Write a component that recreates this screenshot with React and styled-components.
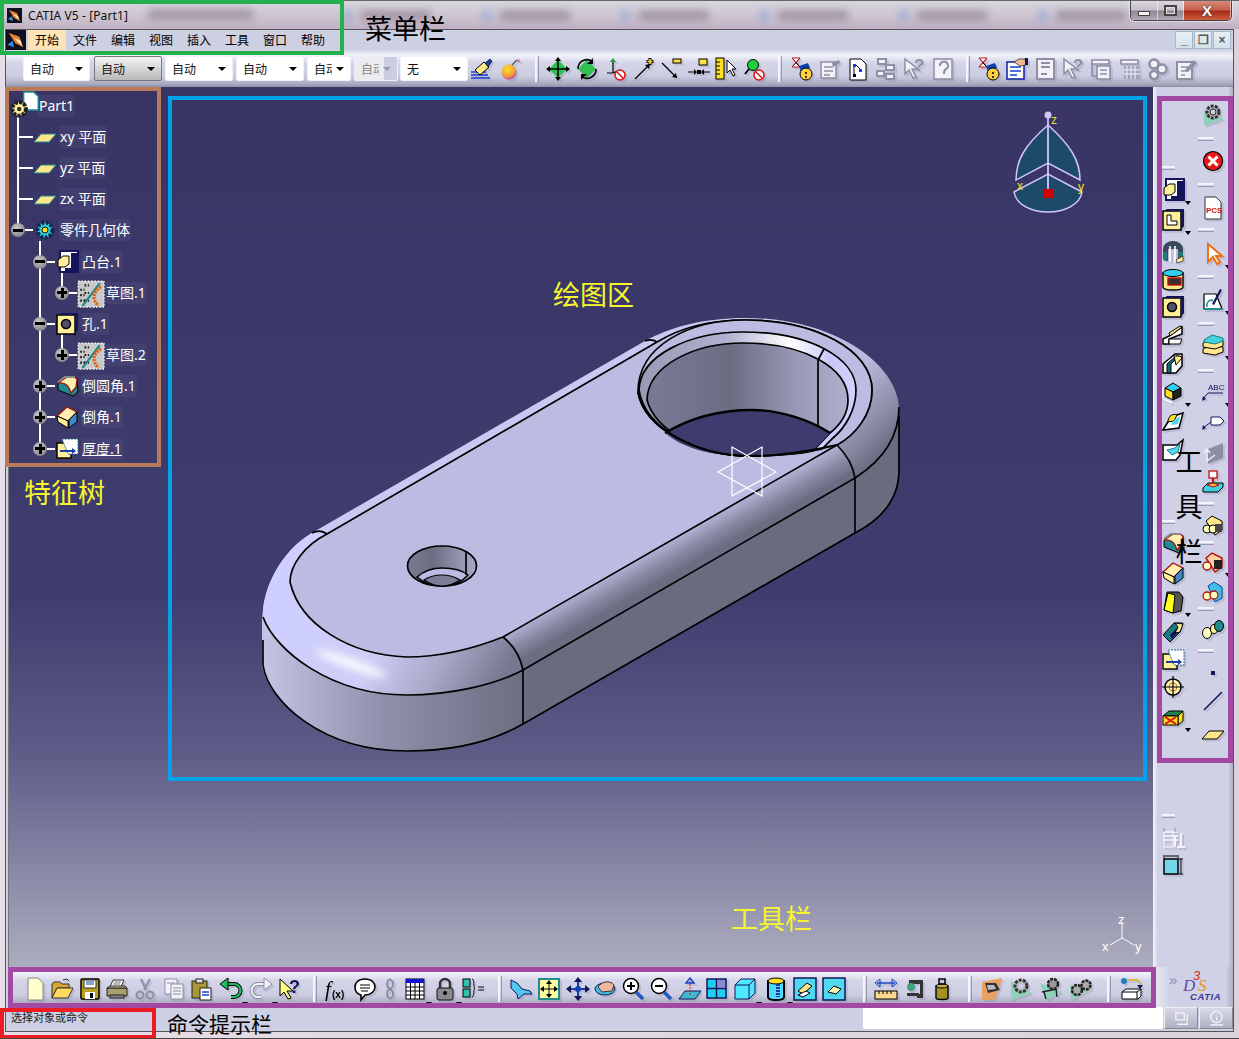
import React from 'react'
import styled, { createGlobalStyle } from 'styled-components'

const CJK = '"Noto Sans CJK SC", "Noto Sans", sans-serif'
const UI = '"Noto Sans", "Noto Sans CJK SC", sans-serif'

const GlobalStyle = createGlobalStyle`
  html, body { margin: 0; padding: 0; background: #cdcfe3; }
  * { box-sizing: border-box; }
`

const G = '#8e8ea4'
const W = '#f2f2f8'
const NAVY = '#14145a'

// small toolbar drawings, all on a 24x24 grid
const ICONS = {
  brush: <><path d="M1 15h15M1 18h17M1 21h19" stroke="#1a3fd0" strokeWidth="1.5"/><path d="M5 13l9-8 5 5-9 8z" fill="#ffee88" stroke="#000"/><path d="M15 6l5-4 2 2-4 6z" fill="#1a3fa0" stroke="#000" strokeWidth=".6"/></>,
  bomb: <><circle cx="10" cy="15" r="7.5" fill="url(#bombFill)"/><path d="M13 8l5-5" stroke="#555" strokeWidth="1.4"/><path d="M18 1l1 2 2-1-1 2 2 1-3 0z" fill="#c05080"/></>,
  move: <><path d="M12 3l9 9-9 9-9-9z" fill="#30c050"/><path d="M12 1v22M1 12h22" stroke="#000" strokeWidth="1.5"/><path d="M12 0l3 4H9zM12 24l3-4H9zM0 12l4-3v6zM24 12l-4-3v6z"/></>,
  rotate: <><path d="M12 3l9 9-9 9-9-9z" fill="#30c050"/><path d="M3 12a9 9 0 0 1 15-7M21 12a9 9 0 0 1-15 7" stroke="#000" strokeWidth="1.6" fill="none"/><path d="M18 1v6h-6zM6 23v-6h6z"/></>,
  axisNo: <><path d="M8 16V5M8 16H2M8 16l7-3" stroke="#000" strokeWidth="1.2"/><path d="M8 1l3 4H5z" fill="#20a040"/><circle cx="15" cy="18" r="5" fill="#fff" stroke="#e01010" strokeWidth="1.5"/><path d="M12 15l6 6" stroke="#e01010" strokeWidth="1.5"/></>,
  arrowPlus: <><path d="M3 22L16 9" stroke="#000" strokeWidth="1.2"/><path d="M18 7l-5 1 4 4z"/><path d="M18 1v7M14.500 4.500h7" stroke="#000" strokeWidth="3"/><path d="M18 2v5M15.500 4.500h5" stroke="#ffe040" strokeWidth="1.500"/></>,
  arrowMinus: <><path d="M3 6l13 13" stroke="#000" strokeWidth="1.2"/><path d="M18 21l-5-1 4-4z"/><rect x="14" y="2" width="8" height="4" fill="#ffe040" stroke="#000"/></>,
  pointsEq: <><path d="M1 15h8M23 15h-8" stroke="#000" strokeWidth="1.2"/><path d="M10 15l-3-3v6zM14 15l3-3v6z"/><rect x="10" y="13" width="4" height="4"/><rect x="12" y="2" width="8" height="6" fill="#ffe040" stroke="#000"/></>,
  rulerCursor: <><rect x="1" y="1" width="8" height="21" fill="#ffe020" stroke="#000"/><path d="M1 5h4M1 9h4M1 13h4M1 17h4" stroke="#000"/><path d="M12 3v13l3-3 3 6 2-1-3-6h4z" fill="#fff" stroke="#000"/></>,
  lensNo: <><circle cx="9" cy="8" r="5.500" fill="#20d040" stroke="#000"/><path d="M5 12l-4 5" stroke="#000" strokeWidth="2"/><circle cx="15" cy="18" r="5" fill="#fff" stroke="#e01010" strokeWidth="1.5"/><path d="M12 15l6 6" stroke="#e01010" strokeWidth="1.5"/></>,
  hourHead: <><path d="M2 1h8L2 10h8z" fill="#fff" stroke="#c01010"/><path d="M2 1l8 9M10 1l-8 9" stroke="#a02020"/><path d="M6 6l6 6" stroke="#000"/><path d="M9 9l9-3 2 5-9 4z" fill="#1040b0"/><circle cx="16" cy="17" r="6" fill="#ffd040" stroke="#000"/><circle cx="16" cy="16" r="1"/><circle cx="16" cy="20" r="1"/></>,
  grayNote: <><rect x="3" y="5" width="15" height="16" fill={W} stroke={G} strokeWidth="1.5"/><path d="M6 10h9M6 14h9M6 18h6" stroke={G} strokeWidth="1.4"/><path d="M14 6l7-3 1 3-7 4z" fill={G}/></>,
  flowDoc: <><path d="M4 2h11l5 5v16H4z" fill="#fff" stroke="#000"/><rect x="7" y="7" width="3" height="3" fill="#1040d0"/><rect x="13" y="12" width="3" height="3" fill="#1040d0"/><rect x="7" y="17" width="3" height="3"/><path d="M8 10v7M10 8l4 4" stroke="#000"/></>,
  grayScatter: <><path d="M4 2h8v5H4zM12 8h8v5h-8zM3 14h7v5H3zM12 17h8v5h-8z" fill={W} stroke={G} strokeWidth="2"/></>,
  grayCursorQ: <><path d="M3 2v15l4-4 4 8 3-1-4-8h6z" fill={W} stroke={G} strokeWidth="1.5"/><text x="12" y="14" fontSize="17" fontWeight="700" fill={G} fontFamily="Liberation Sans, sans-serif">?</text></>,
  grayEar: <><rect x="3" y="2" width="18" height="20" fill={W} stroke={G} strokeWidth="1.5"/><path d="M9 9a4 4 0 1 1 6 3c-2 1-2 3-2 5" stroke={G} strokeWidth="2" fill="none"/></>,
  handDoc: <><rect x="2" y="5" width="17" height="17" fill="#fff" stroke="#1020a0" strokeWidth="1.5"/><path d="M5 10h11M5 14h11M5 18h7" stroke="#1040d0" strokeWidth="1.6"/><path d="M9 5l5-3h6l1 6-6 1z" fill="#f0b890" stroke="#000" strokeWidth=".6"/><rect x="20" y="1" width="3" height="7" fill={NAVY}/></>,
  graySave: <><rect x="4" y="2" width="17" height="20" fill={W} stroke={G} strokeWidth="2"/><path d="M8 6h9M8 10h9M8 17h6" stroke={G} strokeWidth="2"/></>,
  grayTable: <><path d="M3 3h17v4H3zM8 9h13v13H8z" fill={W} stroke={G} strokeWidth="1.6"/><path d="M11 13h7M11 17h7M3 7v12h5" stroke={G} strokeWidth="1.6" fill="none"/></>,
  grayGrid: <><path d="M3 3h17v4H3z" fill={W} stroke={G} strokeWidth="1.6"/><path d="M6 9h16v13H6z" fill={G} opacity=".55"/><path d="M9 9v13M13 9v13M17 9v13M6 13h16M6 17h16" stroke={W}/></>,
  grayGears: <><circle cx="8" cy="7" r="4.500" fill={W} stroke={G} strokeWidth="2.500"/><circle cx="16" cy="12" r="4.500" fill={W} stroke={G} strokeWidth="2.500"/><circle cx="8" cy="18" r="4" fill={W} stroke={G} strokeWidth="2.500"/></>,
  grayEdit: <><rect x="3" y="5" width="15" height="17" fill={W} stroke={G} strokeWidth="2"/><path d="M7 10h7M7 14h7M7 18h4" stroke={G} strokeWidth="1.5"/><path d="M11 13l9-10 3 3-9 9z" fill={G}/></>,

  pad: <><rect x="5" y="1" width="18" height="21" fill="#fff" stroke={NAVY} strokeWidth="2"/><path d="M16 3h6v18H10v-3h6z" fill={NAVY}/><path d="M3 10l5-4h6v8l-4 3H3z" fill="#ffef99" stroke="#000"/></>,
  pocket: <><rect x="2" y="3" width="18" height="19" fill="#ffef99" stroke="#000" strokeWidth="1.500"/><path d="M3 3l3-2h17v17l-3 4V3z" fill={NAVY}/><path d="M6 7v10h10v-4H10V7z" fill="#fff" stroke="#000"/></>,
  shaft: <><path d="M2 19V9a10 8 0 0 1 20 0v10l-5 2V9H7v12z" fill="#3a4a5a"/><path d="M2 12h4v9H3zM17 12h5v7l-3 2z" fill="#207a80"/><path d="M9 6v16M14 6v16" stroke="#fff" strokeWidth="1.6"/><path d="M15 20l7-4v5l-6 2z" fill="#ffef99" stroke="#000" strokeWidth=".6"/></>,
  groove: <><path d="M2 5v14c0 4 20 4 20 0V5z" fill="#ffe68a" stroke="#000" strokeWidth="1.400"/><ellipse cx="12" cy="5" rx="10" ry="3.500" fill="#30d0f0" stroke="#000"/><rect x="7" y="10" width="13" height="7" fill="#333" stroke="#c01010" strokeWidth="1.400"/></>,
  hole: <><rect x="2" y="3" width="18" height="19" fill="#ffef99" stroke="#000" strokeWidth="1.500"/><path d="M3 3l3-2h17v17l-3 4V3z" fill={NAVY}/><circle cx="11" cy="12" r="4.500" fill="#50506a" stroke="#000" strokeWidth="1.500"/></>,
  rib: <><path d="M2 21v-5l6-3 13-9v7L8 16v5z" fill="#fff" stroke="#000" strokeWidth="1.500"/><path d="M8 10l11-7 2 1-12 9z" fill="#ffe68a" stroke="#000"/><path d="M8 16h13l-2 5H8z" fill="#fff" stroke="#000"/></>,
  slot: <><path d="M2 22v-9l12-10h7v12l-6 7z" fill="#fff" stroke="#000" strokeWidth="1.500"/><path d="M6 13l9-8h3l-8 8v9H6z" fill="#106a70" stroke="#000"/><path d="M13 5h6l2 2-6 7z" fill="#ffe68a" stroke="#000"/></>,
  multi: <><path d="M4 8l8-5 8 5-8 4z" fill="#30d0f0" stroke="#000"/><path d="M4 8l8 4v8l-8-4z" fill="#ffe020" stroke="#000"/><path d="M20 8l-8 4v8l8-4z" fill="#222" stroke="#000"/><path d="M2 7v11M3 19l8 4" stroke="#fff" strokeWidth="1.500"/></>,
  sweep: <><path d="M2 22l8-13 12-4-4 15z" fill="#fff" stroke="#000" strokeWidth="1.500"/><path d="M7 14c0-6 5-9 9-7l-3 6z" fill="#ffe020" stroke="#000"/><path d="M12 13l7-5-2 8-7 1z" fill="#50d8f0"/></>,
  tray: <><path d="M2 22V7h14l6-5-3 15-4 5z" fill="#fff" stroke="#000" strokeWidth="1.500"/><path d="M6 12l5 5 6-3 2-8-5 4z" fill="#50d8f0" stroke="#207a90"/></>,
  fillet: <><path d="M3 10c2-6 16-8 19-5l1 13-5 4-15-6z" fill="#1f8a90" stroke="#000"/><path d="M3 9l9-6h7l3 2-1 8-5 6c-2-8-7-11-13-10z" fill="#fff0b0" stroke="#a01010" strokeWidth="1.300"/><path d="M3 8l7-5 10 0" stroke="#888" strokeWidth="2" fill="none"/></>,
  chamfer: <><path d="M2 11l10-9 10 5-9 9z" fill="#ffefb0" stroke="#a01010" strokeWidth="1.300"/><path d="M22 7v10l-8 6v-8z" fill="#3a88c8" stroke="#000"/><path d="M2 11l11 5v7l-10-6z" fill="#ffef99" stroke="#000"/></>,
  draft: <><path d="M6 2h12l4 5-2 14-8 2-9-3z" fill="#555" stroke="#000"/><path d="M3 20L7 3l7 2-2 18z" fill="#ffff20" stroke="#000"/></>,
  prism: <><path d="M2 15l11-12h9l-3 9-10 10z" fill="#1f7a80" stroke="#000"/><path d="M9 15l9-9-1 6-6 7z" fill={NAVY}/><path d="M14 3l8 1-3 8-5 1 3-6z" fill="#ffef99" stroke="#000"/></>,
  thick: <><rect x="2" y="6" width="14" height="15" fill="#ffef99" stroke="#000" strokeWidth="1.400"/><path d="M7 2h16v15H13z" fill="#fff" stroke="#2a6a90" strokeDasharray="2 1"/><path d="M5 14h13" stroke="#1a3fa0" strokeWidth="2"/><path d="M21 14l-4-3v6z" fill="#1a3fa0"/></>,
  target: <><circle cx="12" cy="12" r="8" fill="#fff0b0" stroke="#000" strokeWidth="1.400"/><circle cx="12" cy="12" r="4" fill="none" stroke="#c08020"/><path d="M12 1v22M1 12h22" stroke="#000" strokeWidth="1.200"/></>,
  redBox: <><path d="M2 11l6-5h14l-5 5z" fill="#1f8050" stroke="#000"/><path d="M17 11l5-5v10l-5 4z" fill="#ffe020" stroke="#000"/><rect x="2" y="11" width="15" height="9" fill="#ffe020" stroke="#000"/><path d="M4 12l11 7M15 12L4 19" stroke="#e01010" strokeWidth="2"/></>,

  gearPlate: <><path d="M3 8l20 9-20 7z" fill="#8fd0b8"/><circle cx="12" cy="10" r="6" fill="#bbb" stroke="#333" strokeWidth="3" strokeDasharray="3 1.200"/><circle cx="12" cy="10" r="3" fill="#d0d0e6" stroke="#222"/></>,
  stopX: <><circle cx="12" cy="12" r="9.500" fill="#e81818" stroke="#000" strokeWidth="1.200"/><path d="M7.500 7.500l9 9M16.500 7.500l-9 9" stroke="#fff" strokeWidth="3"/></>,
  pcs: <><path d="M4 1h11l5 5v17H4z" fill="#fff" stroke="#333"/><text x="5" y="17" fontSize="8" fontWeight="700" fill="#d01010" fontFamily="Liberation Sans, sans-serif">PCS</text></>,
  cursor: <><path d="M7 2v18l5-5 4 7 3-2-4-6h6z" fill="#fff" stroke="#f07010" strokeWidth="2"/></>,
  sketch: <><path d="M3 21V6h12l6 15z" fill="#fff" stroke="#000" strokeWidth="1.200"/><path d="M3 21h18" stroke="#1f8a90" strokeWidth="2"/><path d="M6 19c-1-6 4-8 6-6" stroke="#1f8a90" strokeWidth="1.500" fill="none"/><path d="M11 16L19 1l2 1-8 15z" fill={NAVY}/></>,
  layers: <><path d="M2 16l8-4 12 2v5l-8 3-12-2z" fill="#ffe68a" stroke="#000"/><path d="M2 10l8-4 12 2v5l-8 3-12-2z" fill="#ffe68a" stroke="#000"/><path d="M3 7l8-5 11 3v3l-8 3-11-2z" fill="#40d0e0" stroke="#207a80"/></>,
  abc: <><text x="7" y="10" fontSize="8" fill={NAVY} fontFamily="Liberation Sans, sans-serif">ABC</text><path d="M7 13h15M7 13l-5 6" stroke={NAVY} fill="none"/><path d="M1 21l1-5 3 3z" fill={NAVY}/></>,
  tag: <><path d="M10 7h9l4 4-4 4h-9z" fill="#fff" stroke={NAVY}/><path d="M10 12L2 18" stroke={NAVY}/><path d="M1 20l1-5 3 3z" fill={NAVY}/></>,
  grayArrow: <><path d="M7 8l15-6v15l-15 6z" fill={G}/><path d="M6 20V8M6 8L3 12M6 8l3 4M6 20l8-6" stroke={W} strokeWidth="1.300" fill="none"/></>,
  stamp: <><rect x="8" y="1" width="8" height="7" fill="#fff" stroke="#c01010" strokeWidth="1.300"/><path d="M12 8v6" stroke="#c01010" strokeWidth="2"/><path d="M2 18l5-5h15v4l-5 5H2z" fill="#40d0e0" stroke="#000"/><path d="M6 15l6-2 6 2-6 2z" fill="#ffc040" stroke="#c01010"/></>,
  asm1: <><path d="M5 8l6-5 10 5v9l-7 5z" fill="#ffe68a" stroke="#000"/><circle cx="6" cy="16" r="4" fill="#ffffc0" stroke="#000"/><circle cx="12" cy="16" r="4" fill="#ffffc0" stroke="#000"/><rect x="14" y="11" width="7" height="8" fill="#444"/></>,
  asm2: <><path d="M5 8l6-5 10 5v9l-7 5z" fill="#ffd0a0" stroke="#b01010" strokeWidth="1.400"/><circle cx="6" cy="16" r="4" fill="#ffffc0" stroke="#b01010" strokeWidth="1.400"/><rect x="13" y="10" width="8" height="9" fill="#222"/></>,
  asm3: <><path d="M7 6l6-4 8 5v11l-7 4z" fill="#40c0e8" stroke="#1040a0"/><circle cx="6" cy="16" r="4" fill="#ffffc0" stroke="#b01010" strokeWidth="1.300"/><circle cx="13" cy="15" r="4" fill="#ffffc0" stroke="#b01010" strokeWidth="1.300"/></>,
  spheres: <><ellipse cx="6" cy="15" rx="4.500" ry="5.500" fill="#ffffc0" stroke="#000"/><ellipse cx="13" cy="11" rx="3.500" ry="4.500" fill="#ffef99" stroke="#000"/><ellipse cx="18" cy="8" rx="4.500" ry="5.500" fill="#1f8a90" stroke="#000"/></>,
  point: <rect x="10" y="10" width="4" height="4" fill={NAVY}/>,
  line: <path d="M3 21L21 3" stroke={NAVY} strokeWidth="1.600"/>,
  plane: <path d="M1 19L8 11h15l-7 8z" fill="#ffe68a" stroke="#000"/>,
  grayDims: <><path d="M2 6h15M2 10h15M2 14h15" stroke={W} strokeWidth="1.500"/><rect x="3" y="6" width="9" height="15" fill="none" stroke={W}/><path d="M14 9v12M20 7v14M16 21h8" stroke={W} strokeWidth="2"/><path d="M3 2v4M14 2v4" stroke={G}/></>,
  dimBox: <><rect x="3" y="6" width="14" height="15" fill="#70d8e8" stroke="#000" strokeWidth="1.500"/><path d="M3 2v3M17 2v3M4 3h12" stroke="#000"/><path d="M20 6v15M18 6h4M18 21h4" stroke="#000"/></>,

  newDoc: <><path d="M5 1h10l5 5v17H5z" fill="#ffffd0" stroke="#888"/></>,
  open: <><path d="M2 21V7l2-2h6l2 2h7v4H7z" fill="#d8a830" stroke="#333"/><path d="M2 21l5-10h16l-5 10z" fill="#ffd860" stroke="#333"/><path d="M13 3l4-1 2 2" stroke="#333" fill="none"/></>,
  save: <><rect x="3" y="2" width="18" height="20" rx="1" fill="#b8a020" stroke="#000" strokeWidth="1.500"/><rect x="6" y="3" width="12" height="8" fill="#fff" stroke="#333"/><path d="M8 5h8M8 7h8" stroke="#1040a0"/><rect x="7" y="15" width="10" height="7" fill="#fff"/><rect x="12" y="16" width="3" height="5"/></>,
  print: <><path d="M8 3h11l-3 7H5z" fill="#fff" stroke="#333"/><path d="M9 5h7M8 7h7" stroke="#333" strokeWidth=".7"/><path d="M2 11h20v8H2z" fill="#a8a070" stroke="#222"/><path d="M2 11h20l-2-2H5z" fill="#d8d0a0" stroke="#222"/><rect x="5" y="18" width="14" height="3" fill="#888" stroke="#222"/></>,
  cut: <><path d="M8 2l5 11M17 2l-6 11" stroke={G} strokeWidth="2"/><circle cx="7" cy="18" r="3.500" fill="none" stroke={G} strokeWidth="2"/><circle cx="17" cy="18" r="3.500" fill="none" stroke={G} strokeWidth="2"/></>,
  copy: <><rect x="3" y="2" width="12" height="15" fill={W} stroke={G}/><rect x="9" y="7" width="12" height="15" fill={W} stroke={G}/><path d="M11 11h8M11 14h8M11 17h8M5 6h8" stroke={G}/></>,
  paste: <><rect x="3" y="4" width="15" height="17" fill="#a89838" stroke="#222"/><rect x="7" y="2" width="7" height="4" fill="#ddd" stroke="#222"/><rect x="11" y="11" width="11" height="12" fill="#fff" stroke="#222"/><path d="M13 15h7M13 18h7" stroke="#1040d0" strokeWidth="1.500"/></>,
  undo: <><path d="M7 7h8a6 6 0 0 1 0 13h-3" stroke="#000" strokeWidth="4" fill="none"/><path d="M7 7h8a6 6 0 0 1 0 13h-3" stroke="#20c060" strokeWidth="2.200" fill="none"/><path d="M9 1v12L1 7z" fill="#20c060" stroke="#000"/></>,
  redo: <><path d="M17 7H9a6 6 0 0 0 0 13h3" stroke={G} strokeWidth="4" fill="none"/><path d="M17 7H9a6 6 0 0 0 0 13h3" stroke={W} strokeWidth="2" fill="none"/><path d="M15 1v12l8-6z" fill={W} stroke={G}/></>,
  helpCursor: <><path d="M2 2v17l4-4 4 7 3-1-4-7h6z" fill="#ffff80" stroke="#000"/><text x="11" y="16" fontSize="18" fontWeight="700" fill={NAVY} fontFamily="Liberation Sans, sans-serif">?</text></>,
  fx: <><text x="0" y="19" fontSize="21" fontFamily="Liberation Serif, serif" fontStyle="italic">f</text><text x="7" y="21" fontSize="10" fontWeight="700" fontFamily="Liberation Sans, sans-serif">(x)</text></>,
  comment: <><path d="M12 2c7 0 10 4 10 8s-4 8-10 8l-4 5v-5C4 17 2 14 2 10s3-8 10-8z" fill="#fff" stroke="#000" strokeWidth="1.600"/><path d="M7 8h10M7 11h10M8 14h7" stroke="#000"/></>,
  chain: <><ellipse cx="12" cy="7" rx="3" ry="4.500" fill="none" stroke={G} strokeWidth="2"/><ellipse cx="12" cy="17" rx="3" ry="4.500" fill="none" stroke={G} strokeWidth="2"/></>,
  table: <><rect x="3" y="2" width="18" height="20" fill="#fff" stroke="#000"/><rect x="3" y="2" width="18" height="4" fill="#1010d0"/><path d="M3 10h18M3 14h18M3 18h18M7.500 6v16M12 6v16M16.500 6v16" stroke="#000"/></>,
  lock: <><path d="M7 11V7a5 5 0 0 1 10 0v4" stroke="#333" strokeWidth="2.500" fill="none"/><rect x="4" y="11" width="16" height="12" rx="2" fill="#8a8a90" stroke="#111"/><circle cx="12" cy="16" r="2"/></>,
  params: <><rect x="2" y="2" width="7" height="8" fill="#30c0b0" stroke="#000"/><rect x="2" y="12" width="7" height="8" fill="#30c0b0" stroke="#000"/><path d="M11 2c3 0 1 9 3 9-2 0 0 9-3 9" stroke="#000" fill="none"/><path d="M17 10h6M17 13h6" stroke="#000"/></>,
  planeFly: <><path d="M2 3l6 3 5 6 8 2 2 3-8 0-6 5-1-5-6-6z" fill="#50c8f0" stroke={NAVY}/></>,
  fit: <><rect x="2" y="2" width="20" height="20" fill="#ffffa0" stroke="#1f8a90" strokeWidth="2"/><path d="M12 5v14M5 12h14" stroke="#000"/><path d="M12 3l3 4H9zM12 21l3-4H9zM3 12l4-3v6zM21 12l-4-3v6z"/></>,
  pan: <><path d="M12 4v16M4 12h16" stroke="#1040b0" strokeWidth="2"/><path d="M12 0l4 5H8zM12 24l4-5H8zM0 12l5-4v8zM24 12l-5-4v8z" fill={NAVY}/><circle cx="12" cy="12" r="3" fill="#1040b0"/></>,
  handRotate: <><ellipse cx="11" cy="12" rx="10" ry="6" fill="#40c0e0" stroke={NAVY}/><path d="M4 10c5-7 13-6 16-2l-2 6-10 1z" fill="#f0b8a0" stroke="#333"/></>,
  zoomIn: <><circle cx="10" cy="9" r="7.500" fill="#fff" stroke="#000" strokeWidth="1.500"/><path d="M6 9h8M10 5v8" stroke="#000" strokeWidth="2"/><path d="M15 15l7 7" stroke="#1f5ac0" strokeWidth="3.500"/></>,
  zoomOut: <><circle cx="10" cy="9" r="7.500" fill="#fff" stroke="#000" strokeWidth="1.500"/><path d="M6 9h8" stroke="#000" strokeWidth="2"/><path d="M15 15l7 7" stroke="#1f5ac0" strokeWidth="3.500"/></>,
  normal: <><path d="M1 22l6-8h16l-6 8z" fill="#40b8d0" stroke={NAVY}/><path d="M12 18V3" stroke="#d01010" strokeDasharray="2 1"/><path d="M12 1l4 5H8z" fill="none" stroke="#1040d0" strokeWidth="1.400"/></>,
  quad: <><rect x="2" y="2" width="19" height="19" fill="#20d0f0" stroke={NAVY} strokeWidth="1.500"/><path d="M11.500 2v19M2 11.500h19" stroke={NAVY} strokeWidth="1.500"/><rect x="12" y="3" width="8" height="8" fill="#d060c0" opacity=".6"/></>,
  cube: <><path d="M2 8l6-6h14v14l-6 6H2z" fill="#50e8ff" stroke={NAVY}/><path d="M2 8h14v14M16 8l6-6" stroke={NAVY} fill="none"/></>,
  cylinder: <><path d="M4 4v16c0 4 16 4 16 0V4z" fill="#50d8ff" stroke="#000" strokeWidth="2"/><ellipse cx="12" cy="4" rx="8" ry="3" fill="#ffe020" stroke="#000"/><path d="M14 7v13" stroke="#1040a0" strokeWidth="4" strokeDasharray="2 1"/></>,
  hide: <><rect x="1" y="1" width="22" height="22" fill="#50d8f0" stroke={NAVY} strokeWidth="1.500"/><path d="M5 14l9-8 5 3-9 8z" fill="#ffe68a" stroke="#000"/><path d="M5 18l8-4 4 2-7 4z" fill="#fff" stroke="#000"/></>,
  show: <><rect x="1" y="1" width="22" height="22" fill="#50d8f0" stroke={NAVY} strokeWidth="1.500"/><path d="M6 15l6-6 7 3-5 5z" fill="#fff0b0" stroke="#000"/></>,
  measure: <><path d="M3 6h18" stroke="#1040c0" strokeWidth="1.400"/><path d="M1 6l5-4v8zM23 6l-5-4v8z" fill="none" stroke="#1040c0"/><rect x="1" y="14" width="22" height="8" fill="#ffd890" stroke="#000"/><path d="M5 14v3M9 14v3M13 14v3M17 14v3" stroke="#000"/></>,
  clamp: <><path d="M6 3h14v18h-6v-4h3V7H6z" fill="#333"/><path d="M4 16h12v3H4z" fill="#333"/><circle cx="8" cy="10" r="4" fill="#40a080"/></>,
  weight: <><path d="M6 9v12c0 2 12 2 12 0V9z" fill="#a89020" stroke="#000" strokeWidth="1.400"/><ellipse cx="12" cy="9" rx="6" ry="2" fill="#c8b040" stroke="#000"/><rect x="9" y="2" width="6" height="5" fill="none" stroke="#000" strokeWidth="1.500"/></>,
  wbPart: <><path d="M2 5l20-4-7 22-13 0z" fill="#e8a060"/><path d="M5 6h11l4 7-12 3z" fill="#333"/><path d="M7 8h7l2 4-8 1z" fill="#bbb"/></>,
  wbGear: <><path d="M2 4l21 12-21 7z" fill="#8fd0b8"/><circle cx="12" cy="9" r="6" fill="#bbb" stroke="#333" strokeWidth="3" strokeDasharray="3 1.200"/><circle cx="12" cy="9" r="2.500" fill="#d0d0e6"/></>,
  wbTable: <><path d="M1 6l22 9-16 8z" fill="#8fd0b8"/><circle cx="14" cy="7" r="5" fill="#999" stroke="#222" strokeWidth="2.500" strokeDasharray="3 1"/><path d="M3 15l15-3M7 22l-2-7M18 20l-1-8" stroke="#222" strokeWidth="1.400"/></>,
  wbGears: <><path d="M1 8l22 4-21 11z" fill="#8fd0b8"/><circle cx="8" cy="13" r="5" fill="#aaa" stroke="#222" strokeWidth="2.500" strokeDasharray="3 1"/><circle cx="17" cy="8" r="4.500" fill="#aaa" stroke="#222" strokeWidth="2.500" strokeDasharray="3 1"/></>,
  swap: <><circle cx="5" cy="4" r="3" fill="#1f80c0"/><path d="M8 3h9c3 0 4 2 4 5" stroke="#e0b020" strokeWidth="1.400" fill="none"/><path d="M18 8h6l-3 4z" fill={NAVY}/><path d="M3 15l4-3h15v7l-3 3H3z" fill="#fff" stroke="#000"/><path d="M3 15h15v7M18 15l4-3" stroke="#000" fill="none"/></>,
  statusBox: <><rect x="4" y="4" width="12" height="10" fill="none" stroke={W} strokeWidth="2"/><path d="M20 6v14H6" stroke={W} strokeWidth="2" fill="none"/></>,
  statusInfo: <><circle cx="12" cy="10" r="8" fill="none" stroke={W} strokeWidth="2"/><path d="M12 6v1M12 9v6" stroke={W} strokeWidth="2"/><path d="M3 21h18" stroke={W} strokeWidth="2"/></>,

  treeRoot: <><path d="M13 0h9l4 4v12H13z" fill="#fff" stroke="#1f8a90" strokeWidth="1.300"/><circle cx="9" cy="15" r="6" fill="#ffef99" stroke="#222" strokeWidth="3.500" strokeDasharray="3 1"/><circle cx="9" cy="15" r="2" fill="#333"/></>,
  treePlane: <><path d="M1 17l7-8h15l-7 8z" fill="#ffe68a" stroke="#1f8a90"/></>,
  treeBody: <><circle cx="12" cy="12" r="7.500" fill="#30d0e0" stroke="#0a2a50" strokeWidth="4" strokeDasharray="3 1.500"/><circle cx="12" cy="12" r="3" fill="#ffe020" stroke="#111"/></>,
  treeSketch: <><rect x="1" y="1" width="24" height="24" fill="#c8c8c8"/><path d="M1 1h24v24H1z" fill="none" stroke="#fff" strokeDasharray="1.500 1.500"/><path d="M3 9h4M3 14h4M3 19h4M7 5h4M7 12h4M7 19h4" stroke="#111" strokeWidth="2" strokeDasharray="1.500 1.500"/><path d="M5 24L21 3" stroke="#1f8a90" strokeWidth="2"/><path d="M22 6c-8 6-8 12-2 18" stroke="#e06010" strokeWidth="3" fill="none" strokeDasharray="2 1"/></>,
}

const Icon = styled.svg`
  display: block;
  flex: none;
  overflow: visible;
  filter: drop-shadow(2px 2px 0 rgba(130, 130, 160, ${p => (p.$flat ? 0 : 0.28)}));
`

const Glyph = ({ name, size = 24, flat }) => (
  <Icon width={size} height={size} viewBox="0 0 24 24" $flat={flat}>
    {ICONS[name]}
  </Icon>
)

// gaps between toolbar items, worked out from where each item sits along its bar
const withGaps = (items, start, size = 28, sepSize = 4) => {
  let pos = start
  return items.map(([name, at, drop]) => {
    const s = name === '-' ? sepSize : size
    const gap = at - s / 2 - pos
    pos = at - s / 2 + s
    return { name, drop, gap, key: name + at }
  })
}

const Shell = styled.div`
  width: 1239px;
  height: 1039px;
  position: relative;
  overflow: hidden;
  display: flex;
  flex-direction: column;
  background: linear-gradient(90deg, #e6dde6 0%, #dcd2dc 100%);
  border-bottom: 1px solid #444;
  font-family: ${UI};
  color: #000;
`

const TitleBar = styled.header`
  height: 29px;
  flex: none;
  display: flex;
  align-items: center;
  padding-left: 7px;
  position: relative;
  overflow: hidden;
  background: linear-gradient(180deg, #d8d6de 0%, #cfc8d4 45%, #c0b0c2 100%);
  border-top: 1px solid #666;
`

const AppMark = styled.svg`
  width: ${p => p.$size}px;
  height: ${p => p.$size}px;
  flex: none;
`

const TitleText = styled.span`
  font-size: 12px;
  margin-left: 6px;
  color: #111;
  white-space: nowrap;
  letter-spacing: 0.1px;
`

const BlurredTabs = styled.div`
  display: flex;
  margin-left: 20px;
  gap: 52px;
  filter: blur(4px);
  opacity: 0.75;
`

const BlurTab = styled.div`
  display: flex;
  align-items: center;
  gap: 10px;
  width: 87px;
`

const BlurDot = styled.i`
  width: 10px;
  height: 11px;
  background: #7b9bd8;
  border-radius: 3px;
`

const BlurWord = styled.i`
  flex: none;
  width: ${p => p.$w}px;
  height: 9px;
  margin-right: ${p => p.$after || 0}px;
  background: #8c7c8e;
`

const WindowControls = styled.div`
  position: absolute;
  right: 7px;
  top: 0;
  width: 102px;
  height: 20px;
  display: flex;
  border: 1px solid #444;
  border-top: none;
  border-radius: 0 0 5px 5px;
  box-shadow: 0 0 0 1px rgba(255, 255, 255, 0.45);
  overflow: hidden;
`

const WinButton = styled.div`
  width: ${p => p.$w}px;
  display: flex;
  align-items: center;
  justify-content: center;
  font: 700 15px "Liberation Sans", sans-serif;
  color: #fff;
  text-shadow: 0 0 2px #333, 0 0 1px #333;
  border-right: 1px solid rgba(255, 255, 255, 0.55);
  background: ${p => (p.$close
    ? 'linear-gradient(180deg, #d88a7c 0%, #c8604c 45%, #a92c1a 55%, #cf5c3e 100%)'
    : 'linear-gradient(180deg, #dcd6de 0%, #c8c0cc 45%, #8d8894 55%, #b2acb6 100%)')};
`

const WinMin = styled.i`
  width: 12px;
  height: 5px;
  margin-top: 5px;
  background: #f4f4f4;
  border: 1px solid #444;
`

const WinMax = styled.i`
  width: 13px;
  height: 11px;
  border: 2px solid #444;
  background: transparent;
  box-shadow: inset 0 0 0 1px #ddd;
`

const Client = styled.div`
  flex: 1;
  min-height: 0;
  margin: 0 5px 6px 5px;
  display: flex;
  flex-direction: column;
  border: 1px solid #555;
  background: #cdcfe3;
`

const MenuBar = styled.nav`
  height: 20px;
  flex: none;
  display: flex;
  align-items: center;
  position: relative;
`

const MenuItem = styled.div`
  width: 38px;
  height: 20px;
  font: 12px ${CJK};
  line-height: 20px;
  text-align: center;
  background: ${p => (p.$active ? '#fde3b8' : 'transparent')};
`

const MenuItems = styled.div`
  display: flex;
  margin-left: 2px;
`

const MdiButtons = styled.div`
  position: absolute;
  right: 2px;
  top: 1px;
  display: flex;
  gap: 1px;
`

const MdiButton = styled.div`
  width: 18px;
  height: 18px;
  background: linear-gradient(180deg, #e8f0f6, #d4e0ea);
  border: 1px solid #a8b8c8;
  display: flex;
  align-items: center;
  justify-content: center;
  font: 700 12px "Liberation Sans", sans-serif;
  color: #555;
`

const barGradient = 'linear-gradient(180deg, #d2d2e6 0%, #f2f2fa 14%, #d4d4e8 35%, #cdcde2 70%, #a9a9c0 92%, #8f8fa6 100%)'

const TopBar = styled.div`
  height: 37px;
  flex: none;
  display: flex;
  align-items: center;
  padding-left: 17px;
  background: ${barGradient};
  position: relative;
`

const BarCell = styled.div`
  position: relative;
  flex: none;
  width: 28px;
  height: 28px;
  margin-left: ${p => p.$gap}px;
  display: flex;
  align-items: center;
  justify-content: center;
  &::after {
    content: '';
    display: ${p => (p.$drop ? 'block' : 'none')};
    position: absolute;
    right: -3px;
    bottom: -3px;
    border: 3.5px solid transparent;
    border-top: 4px solid #000;
    border-bottom: none;
  }
`

const BarSep = styled.div`
  flex: none;
  width: 4px;
  height: 26px;
  margin-left: ${p => p.$gap}px;
  border-left: 2px solid #f4f4fa;
  border-right: 1px solid #9a9ab0;
`

const Combo = styled.div`
  flex: none;
  width: ${p => p.$w}px;
  height: 25px;
  margin-left: ${p => p.$gap}px;
  padding-left: 6px;
  display: flex;
  align-items: center;
  font: 12px ${CJK};
  color: ${p => (p.$off ? '#888' : '#111')};
  border-radius: 2px;
  background: ${p => (p.$focus
    ? 'linear-gradient(180deg, #f4f4f4, #b8b8b8)'
    : p.$off ? 'linear-gradient(90deg, #ececf0 70%, #cdcde2 70%)' : '#fff')};
  border: 1px solid ${p => (p.$focus ? '#777' : '#eef')};
`

const ComboText = styled.span`
  flex: 1;
  overflow: hidden;
  white-space: nowrap;
`

const ComboArrow = styled.i`
  flex: none;
  margin: 0 6px 0 4px;
  border: 4px solid transparent;
  border-top: 4px solid ${p => (p.$off ? '#999' : '#000')};
  border-bottom: none;
`

const Workspace = styled.div`
  height: 880px;
  flex: none;
  display: flex;
`

const Viewport = styled.main`
  position: relative;
  width: 1145px;
  margin-left: 2px;
  flex: none;
  padding-top: 3px;
  border-left: 1px solid #777;
  background: linear-gradient(180deg, #383565 0%, #3f3c6f 58%, #5f5c88 76%, #8c8ba8 90%, #adadbf 100%);
`

const ModelDrawing = styled.svg`
  position: absolute;
  left: -1px;
  top: 0;
  width: 1145px;
  height: 880px;
`

const Tree = styled.ul`
  position: relative;
  margin: 0;
  padding: 0;
  list-style: none;
`

const TreeRow = styled.li`
  position: relative;
  height: 31.2px;
  display: flex;
  align-items: center;
  padding-left: ${p => (p.$root ? 0 : p.$depth * 22 + 2)}px;
`

const Guide = styled.i`
  position: absolute;
  left: ${p => p.$x - 10}px;
  top: ${p => p.$from}px;
  bottom: ${p => p.$to}px;
  width: 2px;
  background: #fff;
`

const Knob = styled.span`
  position: relative;
  flex: none;
  width: 14px;
  height: 14px;
  border-radius: 50%;
  background: radial-gradient(circle at 40% 35%, #c8c8c8, #707078);
  &::before {
    content: '';
    position: absolute;
    left: 2px;
    right: 2px;
    top: 5.5px;
    height: 3px;
    background: #000;
  }
  &::after {
    content: '';
    display: ${p => (p.$open ? 'none' : 'block')};
    position: absolute;
    top: 2px;
    bottom: 2px;
    left: 5.5px;
    width: 3px;
    background: #000;
  }
`

const Stub = styled.i`
  flex: none;
  width: 8px;
  height: 2px;
  background: #fff;
`

const BareStub = styled.i`
  position: relative;
  flex: none;
  margin-left: 7px;
  width: 15px;
  height: 2px;
  background: #fff;
`

const NodeLabel = styled.span`
  margin-left: 2px;
  padding: 2px 1px;
  background: rgba(88, 86, 138, 0.28);
  border-radius: 2px;
  color: #fff;
  font: 14px/18px ${UI};
  white-space: nowrap;
  text-decoration: ${p => (p.$link ? 'underline' : 'none')};
`

const RightDock = styled.aside`
  width: 80px;
  flex: none;
  display: flex;
  background: linear-gradient(90deg, #f4f4fa 0%, #d0d0e6 6%, #d0d0e6 94%, #b0b0c4 100%);
`

const DockColumn = styled.div`
  width: 40px;
  flex: none;
  display: flex;
  flex-direction: column;
  align-items: center;
`

const DockCell = styled.div`
  position: relative;
  flex: none;
  width: 28px;
  height: 28px;
  margin-top: ${p => p.$gap}px;
  display: flex;
  align-items: center;
  justify-content: center;
  &::after {
    content: '';
    display: ${p => (p.$drop ? 'block' : 'none')};
    position: absolute;
    right: -4px;
    bottom: -1px;
    border: 3.5px solid transparent;
    border-top: 4px solid #000;
    border-bottom: none;
  }
`

const DockSep = styled.div`
  flex: none;
  align-self: flex-start;
  width: ${p => p.$w}px;
  height: 4px;
  margin-top: ${p => p.$gap}px;
  margin-left: ${p => p.$left}px;
  border-top: 2px solid #f4f4fa;
  border-bottom: 1px solid #9a9ab0;
`

const BottomRow = styled.div`
  height: 40px;
  flex: none;
  display: flex;
`

const BottomBar = styled.div`
  width: 1148px;
  flex: none;
  margin-left: 2px;
  display: flex;
  align-items: center;
  padding-top: 4px;
  background: ${barGradient};
`

const LogoBox = styled.div`
  flex: 1;
  display: flex;
  align-items: flex-start;
  padding: 2px 0 0 13px;
  background: linear-gradient(90deg, #e4e4f2 0%, #d0d0e6 20%, #d0d0e6 90%, #b0b0c4 100%);
`

const Chevrons = styled.span`
  flex: none;
  width: 14px;
  margin-top: 2px;
  font: 15px "Liberation Sans", sans-serif;
  color: #8a8aa8;
`

const LogoMark = styled.svg`
  width: 42px;
  height: 32px;
  flex: none;
`

const StatusBar = styled.footer`
  flex: 1;
  display: flex;
  background: #cdcfe3;
`

const Prompt = styled.div`
  width: 857px;
  flex: none;
  padding: 3px 0 0 5px;
  font: 11px/15px ${CJK};
  color: #222;
`

const CommandInput = styled.div`
  width: 300px;
  height: 22px;
  flex: none;
  background: #fff;
  border-radius: 2px;
`

const StatusButton = styled.div`
  width: 34px;
  height: 22px;
  flex: none;
  margin-left: 1px;
  display: flex;
  align-items: center;
  justify-content: center;
  background: linear-gradient(180deg, #d8d8ea, #b0b0c4);
  border: 1px solid #eee;
  border-right-color: #888;
  border-bottom-color: #888;
`

const Callout = styled.div`
  position: absolute;
  left: ${p => p.$x}px;
  top: ${p => p.$y}px;
  width: ${p => p.$w}px;
  height: ${p => p.$h}px;
  border: ${p => p.$t}px solid ${p => p.$color};
  pointer-events: none;
`

const Note = styled.div`
  position: absolute;
  left: ${p => p.$x}px;
  top: ${p => p.$y}px;
  font: ${p => p.$size || 27}px/1.2 ${CJK};
  color: ${p => p.$color || '#000'};
  white-space: nowrap;
`

const VerticalNote = styled(Note)`
  writing-mode: vertical-rl;
  letter-spacing: 18px;
`

const combos = [
  { label: '自动', w: 67, gap: 0 },
  { label: '自动', w: 68, gap: 4, focus: true },
  { label: '自动', w: 68, gap: 3 },
  { label: '自动', w: 68, gap: 3 },
  { label: '自动', w: 44, gap: 3 },
  { label: '自动', w: 44, gap: 3, off: true },
  { label: '无', w: 68, gap: 2 },
]

const topIcons = withGaps([
  ['brush', 482], ['bomb', 511], ['-', 537],
  ['move', 558], ['rotate', 587], ['axisNo', 617], ['arrowPlus', 644], ['arrowMinus', 671], ['pointsEq', 699], ['rulerCursor', 727], ['lensNo', 756], ['-', 780],
  ['hourHead', 802], ['grayNote', 830], ['flowDoc', 858], ['grayScatter', 886], ['grayCursorQ', 914], ['grayEar', 943], ['-', 968],
  ['hourHead', 989], ['handDoc', 1017], ['graySave', 1045], ['grayCursorQ', 1073], ['grayTable', 1101], ['grayGrid', 1130], ['grayGears', 1158], ['grayEdit', 1186],
], 468)

const bottomIcons = withGaps([
  ['newDoc', 35], ['open', 62], ['save', 90], ['print', 117], ['cut', 145], ['copy', 174], ['paste', 201], ['undo', 231, true], ['redo', 261, true], ['helpCursor', 290], ['-', 315],
  ['fx', 337], ['comment', 365], ['chain', 390], ['table', 415, true], ['lock', 445, true], ['params', 473], ['-', 500],
  ['planeFly', 521], ['fit', 549], ['pan', 578], ['handRotate', 606], ['zoomIn', 633], ['zoomOut', 661], ['normal', 690], ['quad', 717], ['cube', 745, true], ['cylinder', 776, true], ['hide', 805], ['show', 834], ['-', 865],
  ['measure', 886], ['clamp', 915], ['weight', 942], ['-', 970],
  ['wbPart', 992], ['wbGear', 1021], ['wbTable', 1051], ['wbGears', 1081], ['-', 1109],
  ['swap', 1131],
], 8)

const dockLeft = withGaps([
  ['-', 168], ['pad', 190, true], ['pocket', 220, true], ['shaft', 252], ['groove', 280], ['hole', 307], ['rib', 335], ['slot', 363], ['multi', 392, true], ['sweep', 420], ['tray', 450],
  ['-', 522], ['fillet', 543], ['chamfer', 573], ['draft', 602, true], ['prism', 632], ['thick', 660], ['target', 687], ['redBox', 717, true],
  ['-', 816], ['grayDims', 838], ['dimBox', 865],
], 87)

const dockRight = withGaps([
  ['gearPlate', 114], ['-', 139], ['stopX', 161], ['-', 185], ['pcs', 208], ['-', 230], ['cursor', 254, true], ['-', 277], ['sketch', 300, true], ['-', 324], ['layers', 345, true], ['-', 371],
  ['abc', 392, true], ['tag', 422], ['grayArrow', 453], ['stamp', 482], ['-', 504], ['asm1', 525], ['-', 543], ['asm2', 562, true], ['asm3', 592], ['-', 609], ['spheres', 630], ['-', 651],
  ['point', 673], ['line', 701], ['plane', 732],
], 87)

const treeNodes = [
  { label: 'Part1', icon: 'treeRoot', root: true, guides: [{ x: 18, from: 22, to: 0 }] },
  { label: 'xy 平面', icon: 'treePlane', depth: 0, guides: [{ x: 18, from: 0, to: 0 }] },
  { label: 'yz 平面', icon: 'treePlane', depth: 0, guides: [{ x: 18, from: 0, to: 0 }] },
  { label: 'zx 平面', icon: 'treePlane', depth: 0, guides: [{ x: 18, from: 0, to: 0 }] },
  { label: '零件几何体', icon: 'treeBody', depth: 0, knob: 'open', guides: [{ x: 18, from: 0, to: 20 }, { x: 40, from: 26, to: 0 }] },
  { label: '凸台.1', icon: 'pad', depth: 1, knob: 'open', guides: [{ x: 40, from: 0, to: 0 }, { x: 62, from: 24, to: 0 }] },
  { label: '草图.1', icon: 'treeSketch', depth: 2, knob: 'closed', guides: [{ x: 40, from: 0, to: 0 }, { x: 62, from: 0, to: 18 }] },
  { label: '孔.1', icon: 'hole', depth: 1, knob: 'open', guides: [{ x: 40, from: 0, to: 0 }, { x: 62, from: 24, to: 0 }] },
  { label: '草图.2', icon: 'treeSketch', depth: 2, knob: 'closed', guides: [{ x: 40, from: 0, to: 0 }, { x: 62, from: 0, to: 18 }] },
  { label: '倒圆角.1', icon: 'fillet', depth: 1, knob: 'closed', guides: [{ x: 40, from: 0, to: 0 }] },
  { label: '倒角.1', icon: 'chamfer', depth: 1, knob: 'closed', guides: [{ x: 40, from: 0, to: 0 }] },
  { label: '厚度.1', icon: 'thick', depth: 1, knob: 'closed', link: true, guides: [{ x: 40, from: 0, to: 16 }] },
]

const menuItems = ['开始', '文件', '编辑', '视图', '插入', '工具', '窗口', '帮助']

const BarRun = ({ items }) => items.map(it => (
  it.name === '-'
    ? <BarSep key={it.key} $gap={it.gap} />
    : <BarCell key={it.key} $gap={it.gap} $drop={it.drop}><Glyph name={it.name} /></BarCell>
))

const DockRun = ({ items, sepLeft, sepW }) => items.map(it => (
  it.name === '-'
    ? <DockSep key={it.key} $gap={it.gap} $left={sepLeft} $w={sepW} />
    : <DockCell key={it.key} $gap={it.gap} $drop={it.drop}><Glyph name={it.name} /></DockCell>
))

const Catia = ({ size }) => (
  <AppMark viewBox="0 0 15 15" $size={size}>
    <rect width="15" height="15" fill="#101020" />
    <path d="M2 2l8 3 3 8-6-3z" fill="#e88030" />
    <path d="M6 6l5 2 1 4z" fill="#f8f0d0" />
    <path d="M1 11l4-3 1 5z" fill="#3090e0" />
  </AppMark>
)

const Model = () => {
  const lines = { stroke: '#000', strokeWidth: 1.7, fill: 'none' }
  return (
    <ModelDrawing viewBox="8 87 1145 880">
      <defs>
        <linearGradient id="wallFill" gradientUnits="userSpaceOnUse" x1="262" y1="0" x2="530" y2="0">
          <stop offset="0" stopColor="#c4c4e4" />
          <stop offset=".45" stopColor="#9090ac" />
          <stop offset="1" stopColor="#6b6b80" />
        </linearGradient>
        <linearGradient id="endFill" gradientUnits="userSpaceOnUse" x1="780" y1="320" x2="895" y2="440">
          <stop offset="0" stopColor="#c8c8f2" />
          <stop offset=".55" stopColor="#b8b8dc" />
          <stop offset=".85" stopColor="#8a8aa4" />
          <stop offset="1" stopColor="#6c6c82" />
        </linearGradient>
        <linearGradient id="leftFill" gradientUnits="userSpaceOnUse" x1="300" y1="590" x2="490" y2="700">
          <stop offset="0" stopColor="#cfcfff" />
          <stop offset=".45" stopColor="#cdcdf6" />
          <stop offset=".75" stopColor="#a4a4c2" />
          <stop offset="1" stopColor="#77778f" />
        </linearGradient>
        <linearGradient id="midFill" gradientUnits="userSpaceOnUse" x1="680" y1="530" x2="697" y2="560">
          <stop offset="0" stopColor="#bcbce2" />
          <stop offset=".55" stopColor="#8d8da8" />
          <stop offset="1" stopColor="#6c6c82" />
        </linearGradient>
        <linearGradient id="chamferFill" gradientUnits="userSpaceOnUse" x1="640" y1="0" x2="856" y2="0">
          <stop offset="0" stopColor="#9a9ab5" />
          <stop offset=".4" stopColor="#b0b0d0" />
          <stop offset=".7" stopColor="#ffffff" />
          <stop offset=".88" stopColor="#c8c8f8" />
          <stop offset="1" stopColor="#d2d2ff" />
        </linearGradient>
        <linearGradient id="boreFill" gradientUnits="userSpaceOnUse" x1="647" y1="0" x2="848" y2="0">
          <stop offset="0" stopColor="#7a7a96" />
          <stop offset=".42" stopColor="#6c6c82" />
          <stop offset=".75" stopColor="#9a9ab8" />
          <stop offset="1" stopColor="#b0b0ce" />
        </linearGradient>
        <linearGradient id="smallBore" gradientUnits="userSpaceOnUse" x1="408" y1="0" x2="476" y2="0">
          <stop offset="0" stopColor="#7a7a92" />
          <stop offset=".35" stopColor="#6c6c82" />
          <stop offset="1" stopColor="#aaaac8" />
        </linearGradient>
        <radialGradient id="bombFill" cx=".4" cy=".3" r=".8">
          <stop offset="0" stopColor="#ffe020" />
          <stop offset=".6" stopColor="#f0a040" />
          <stop offset="1" stopColor="#c020c0" />
        </radialGradient>
        <filter id="soft" x="-30%" y="-100%" width="160%" height="300%">
          <feGaussianBlur stdDeviation="4" />
        </filter>
      </defs>

      {/* body, then the fillet band, then the flat top */}
      <path d="M645 341L312 533C280 552 262 590 262 625V665C268 700 320 751 407 751C455 751 495 740 523 724L855 533C880 520 899 500 899 470V410C895 360 830 318 745 318C705 318 670 327 645 341Z" fill="url(#wallFill)" />
      <path d="M645 341L312 533C280 552 262 590 263 617C275 650 330 695 407 695C450 695 495 685 523 670L855 478C880 462 899 440 899 407C895 360 830 318 745 318C705 318 670 327 645 341Z" fill="url(#endFill)" />
      <path d="M312 533C280 552 262 590 263 617C275 650 330 695 407 695C450 695 495 685 523 670C520 655 513 645 503 637C470 650 440 657 407 657C350 655 300 625 290 582C290 565 305 545 327 534Z" fill="url(#leftFill)" />
      <ellipse cx="352" cy="664" rx="38" ry="4.500" transform="rotate(20 352 664)" fill="#fff" filter="url(#soft)" />
      <path d="M503 637L837 445C847 455 853 465 855 478L523 670C520 655 513 645 503 637Z" fill="url(#midFill)" />
      <path d="M327 534C305 545 290 565 290 582C300 625 350 655 407 657C440 657 470 650 503 637L837 445C855 435 872 415 872 390C872 350 815 320 745 320C710 320 680 328 657 342Z" fill="#bcbce2" stroke="#000" strokeWidth="1.700" />

      {/* large counterbored hole */}
      <path d="M638 392C638 345 690 320 745 320C815 320 872 350 872 390C872 415 855 435 837 445C815 450 785 456 750 456C700 456 645 430 638 392Z" fill="#bcbce2" stroke="#000" strokeWidth="1.700" />
      <path d="M639 390C640 355 690 332 743 332C810 332 856 358 856 390C856 410 845 428 833 438L822 449C800 454 775 456 750 456C700 456 645 430 639 390Z" fill="url(#chamferFill)" stroke="#000" strokeWidth="1.700" />
      <path d="M647 400C648 365 695 343 743 343C805 343 848 368 848 400C848 415 840 425 830 433L813 451C795 455 770 456 750 456C700 456 655 430 647 400Z" fill="url(#boreFill)" stroke="#000" strokeWidth="1.700" />
      <path d="M665 433C690 418 720 410 752 410C780 410 810 420 830 433L813 451C795 455 770 456 750 456C715 456 685 450 665 433Z" fill="#3e3b6e" />
      <path d="M665 433C690 418 720 410 752 410C780 410 810 420 830 433" {...lines} strokeWidth="2.400" />
      <path d="M638 392C645 430 700 456 750 456C785 456 815 450 837 445" {...lines} strokeWidth="2.200" />
      <path d="M818 360V426M818 360L824 349" {...lines} />

      {/* seams on the long side and the ends */}
      <path d="M837 445C847 455 853 465 855 478V533" {...lines} />
      <path d="M503 637C513 645 520 655 523 670V724" {...lines} />
      <path d="M523 670L855 478C880 462 899 440 899 407" {...lines} />
      <path d="M263 617C275 650 330 695 407 695C450 695 495 685 523 670" {...lines} />
      <path d="M312 533C318 530 323 531 327 534M645 341C650 339 654 340 657 342" {...lines} />

      {/* outline of the bottom */}
      <path d="M263 640V665C268 700 320 751 407 751C455 751 495 740 523 724L855 533C880 520 899 500 899 470V415" {...lines} />

      {/* small counterbored hole */}
      <ellipse cx="442" cy="566" rx="34.500" ry="20" fill="url(#smallBore)" stroke="#000" strokeWidth="1.700" />
      <path d="M417 577C425 570 435 568 442 568C452 568 462 570 468 575C462 582 452 586 442 586C432 586 424 583 417 577Z" fill="#bcbce2" stroke="#000" strokeWidth="1.400" />
      <path d="M424 580C430 576 436 575 442 575C448 575 455 577 460 580C454 584 448 586 442 586C436 586 430 584 424 580Z" fill="#7d7d97" stroke="#000" strokeWidth="1.200" />
      <path d="M466 552V575" {...lines} />

      {/* part origin marker */}
      <path d="M732 447L776 472L732 496ZM762 447L718 472L762 496Z" fill="none" stroke="#fff" strokeWidth="1.200" />

      {/* view compass */}
      <path d="M1048 125C1025 145 1016 160 1016 180L1048 163L1080 180C1080 160 1070 145 1048 125Z" fill="#1c4a68" stroke="#d4c4ff" strokeWidth="1.500" />
      <path d="M1014 192C1016 205 1032 212 1048 212C1064 212 1080 205 1082 192L1048 174Z" fill="#1c4a68" stroke="#d4c4ff" strokeWidth="1.500" />
      <path d="M1048 118V190" stroke="#d4c4ff" strokeWidth="1.800" />
      <circle cx="1048" cy="115" r="3.500" fill="#d4c4ff" />
      <rect x="1044" y="189" width="9" height="9" fill="#d00000" />
      <g fill="#f4e020" fontSize="12" fontFamily="Liberation Sans, sans-serif">
        <text x="1051" y="124">z</text>
        <text x="1017" y="190">x</text>
        <text x="1078" y="191">y</text>
      </g>

      {/* corner axis */}
      <g stroke="#fff" strokeWidth="1" fill="none">
        <path d="M1122 938V922M1122 938L1110 945M1122 938L1134 945" />
      </g>
      <g fill="#fff" fontSize="13" fontFamily="Liberation Sans, sans-serif">
        <text x="1118" y="924">z</text>
        <text x="1102" y="951">x</text>
        <text x="1135" y="951">y</text>
      </g>
    </ModelDrawing>
  )
}

export default function App() {
  return (
    <>
      <GlobalStyle />
      <Shell>
        <TitleBar>
          <Catia size={15} />
          <TitleText>CATIA V5 - [Part1]</TitleText>
          <BlurredTabs>
            <BlurWord $w={105} $after={39} />
            {[0, 1, 2, 3, 4, 5].map(i => (
              <BlurTab key={i}>
                <BlurDot />
                <BlurWord $w={70} />
              </BlurTab>
            ))}
          </BlurredTabs>
          <WindowControls>
            <WinButton $w={28}><WinMin /></WinButton>
            <WinButton $w={26}><WinMax /></WinButton>
            <WinButton $w={48} $close>X</WinButton>
          </WindowControls>
        </TitleBar>

        <Client>
          <MenuBar>
            <Catia size={20} />
            <MenuItems>
              {menuItems.map((m, i) => <MenuItem key={m} $active={i === 0}>{m}</MenuItem>)}
            </MenuItems>
            <MdiButtons>
              <MdiButton>_</MdiButton>
              <MdiButton>❐</MdiButton>
              <MdiButton>×</MdiButton>
            </MdiButtons>
          </MenuBar>

          <TopBar>
            {combos.map((c, i) => (
              <Combo key={i} $w={c.w} $gap={c.gap} $focus={c.focus} $off={c.off}>
                <ComboText>{c.label}</ComboText>
                <ComboArrow $off={c.off} />
              </Combo>
            ))}
            <BarRun items={topIcons} />
          </TopBar>

          <Workspace>
            <Viewport>
              <Model />
              <Tree>
                {treeNodes.map(n => (
                  <TreeRow key={n.label} $depth={n.depth} $root={n.root}>
                    {n.guides.map(g => <Guide key={g.x} $x={g.x} $from={g.from} $to={g.to} />)}
                    {n.knob && <Knob $open={n.knob === 'open'} />}
                    {n.knob && <Stub />}
                    {!n.knob && !n.root && <BareStub />}
                    <Glyph name={n.icon} size={n.root ? 27 : n.icon === 'treeSketch' ? 26 : 24} flat />
                    <NodeLabel $link={n.link}>{n.label}</NodeLabel>
                  </TreeRow>
                ))}
              </Tree>
            </Viewport>
            <RightDock>
              <DockColumn>
                <DockRun items={dockLeft} sepLeft={9} sepW={13} />
              </DockColumn>
              <DockColumn>
                <DockRun items={dockRight} sepLeft={5} sepW={16} />
              </DockColumn>
            </RightDock>
          </Workspace>

          <BottomRow>
            <BottomBar>
              <BarRun items={bottomIcons} />
            </BottomBar>
            <LogoBox>
              <Chevrons>»</Chevrons>
              <LogoMark viewBox="0 0 42 32">
                <text x="10" y="11" fontSize="13" fontStyle="italic" fill="#d03020" fontFamily="Liberation Sans, sans-serif">3</text>
                <text x="0" y="22" fontSize="17" fontStyle="italic" fill="#5a4aa8" fontFamily="Liberation Serif, serif">D</text>
                <text x="15" y="22" fontSize="17" fontStyle="italic" fill="#e89020" fontFamily="Liberation Serif, serif">S</text>
                <text x="7" y="31" fontSize="9.500" fontWeight="700" fontStyle="italic" letterSpacing=".6" fill="#3a3a90" fontFamily="Liberation Sans, sans-serif">CATIA</text>
              </LogoMark>
            </LogoBox>
          </BottomRow>

          <StatusBar>
            <Prompt>选择对象或命令</Prompt>
            <CommandInput />
            <StatusButton><Glyph name="statusBox" size={17} flat /></StatusButton>
            <StatusButton><Glyph name="statusInfo" size={17} flat /></StatusButton>
          </StatusBar>
        </Client>

        <Callout $x={0} $y={0} $w={344} $h={55} $t={4} $color="#22b14c" />
        <Note $x={365} $y={12}>菜单栏</Note>
        <Callout $x={5} $y={87} $w={156} $h={380} $t={4} $color="#b97a57" />
        <Note $x={24} $y={476} $color="#f6f62e">特征树</Note>
        <Callout $x={168} $y={96} $w={979} $h={685} $t={4} $color="#00a2e8" />
        <Note $x={553} $y={278} $color="#f6f62e">绘图区</Note>
        <Callout $x={1157} $y={96} $w={76} $h={667} $t={5} $color="#a349a4" />
        <VerticalNote $x={1172} $y={448}>工具栏</VerticalNote>
        <Note $x={731} $y={902} $color="#f6f62e">工具栏</Note>
        <Callout $x={8} $y={967} $w={1148} $h={41} $t={5} $color="#a349a4" />
        <Callout $x={0} $y={1008} $w={156} $h={31} $t={4} $color="#ed1c24" />
        <Note $x={167} $y={1011} $size={21}>命令提示栏</Note>
      </Shell>
    </>
  )
}
